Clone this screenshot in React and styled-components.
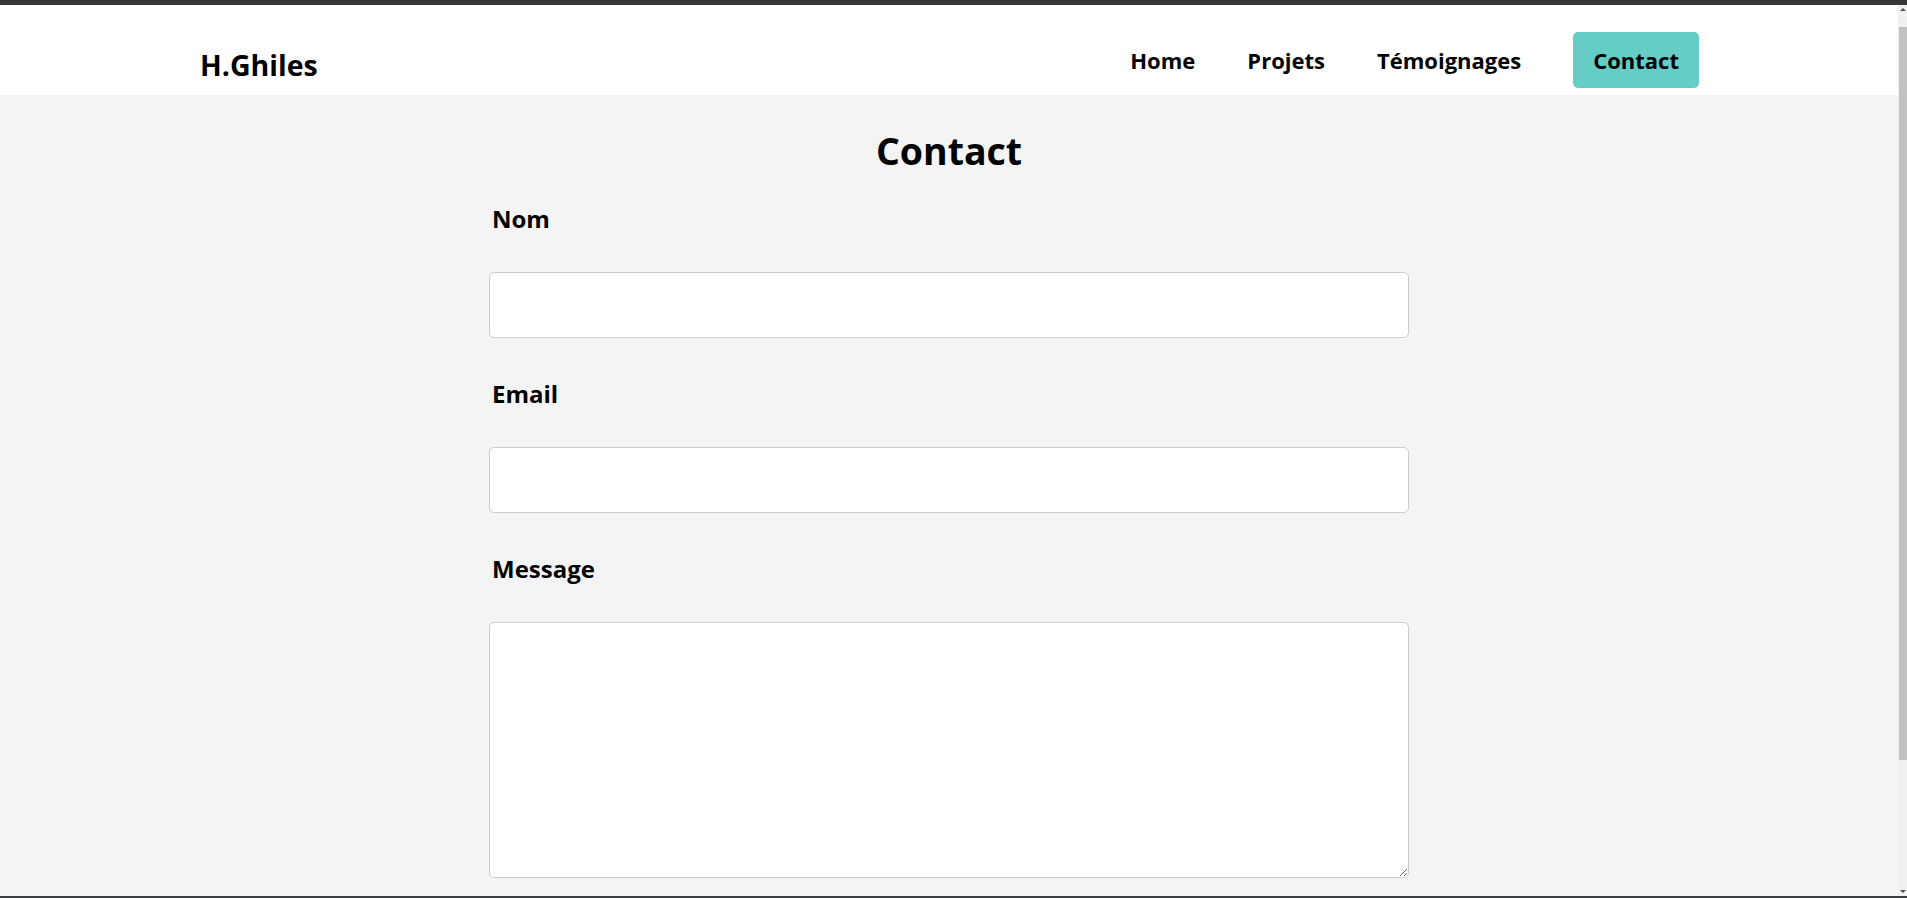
import React from 'react'
import styled, { createGlobalStyle } from 'styled-components'

const GlobalStyle = createGlobalStyle`
  * { box-sizing: border-box; }
  html, body { margin: 0; padding: 0; height: 100%; overflow: hidden; }
  body {
    font-family: "Open Sans", "Noto Sans", sans-serif;
    color: #000;
    background: #f4f4f4;
  }
`

const Shell = styled.div`
  height: 898px;
  display: flex;
  flex-direction: column;
  background: #35363a;
`

const WindowTop = styled.div`
  height: 5px;
  flex: none;
  background: #35363a;
`

const WindowBottom = styled.div`
  height: 2px;
  flex: none;
  background: #3c3f44;
`

const Frame = styled.div`
  flex: 1;
  min-height: 0;
  display: flex;
`

const Page = styled.div`
  flex: 1;
  overflow: hidden;
  background: #f4f4f4;
`

// the browser's scrollbar, drawn as the reference shows it
const ScrollTrack = styled.div`
  width: 9px;
  flex: none;
  display: flex;
  flex-direction: column;
  background: #f0f0f0;
`

const ScrollArrow = styled.div`
  height: 22px;
  flex: none;
  display: flex;
  justify-content: center;
  align-items: ${p => (p.$down ? 'flex-end' : 'flex-start')};
  padding: ${p => (p.$down ? '0 0 3px' : '3px 0 0')};
  &::before {
    content: '';
    border-left: 3px solid transparent;
    border-right: 3px solid transparent;
    ${p => (p.$down ? 'border-top: 3px solid #505050;' : 'border-bottom: 3px solid #505050;')}
  }
`

const ScrollThumb = styled.div`
  height: 733px;
  margin-left: 1px;
  background: #c1c1c1;
`

const ScrollRest = styled.div`
  flex: 1;
`

const Header = styled.header`
  height: 90px;
  background: #fff;
`

const HeaderInner = styled.div`
  max-width: 1500px;
  margin: 0 auto;
  display: flex;
  justify-content: space-between;
  align-items: flex-start;
`

const Logo = styled.h1`
  margin: 43px 0 0 1px;
  font-size: 28.5px;
  line-height: 1.2;
  font-weight: 700;
`

const NavList = styled.ul`
  list-style: none;
  margin: 27px 0 0;
  padding: 0;
  display: flex;
  gap: 52px;
`

const NavLink = styled.a`
  display: block;
  padding: ${p => (p.$active ? '12px 20px' : '12px 0')};
  font-size: 22px;
  line-height: 32px;
  font-weight: 700;
  color: #000;
  text-decoration: none;
  border-radius: 5px;
  background: ${p => (p.$active ? '#65cdc5' : 'transparent')};
`

const Main = styled.main`
  padding: 33px 0 0;
`

const Title = styled.h2`
  margin: 0 0 31px;
  text-align: center;
  font-size: 37.5px;
  line-height: 45px;
  font-weight: 700;
`

const Form = styled.form`
  width: 920px;
  margin: 0 auto;
  display: flex;
  flex-direction: column;
`

const Label = styled.label`
  display: block;
  padding-left: 3px;
  margin-bottom: 39px;
  font-size: 24px;
  line-height: 29px;
  font-weight: 700;
`

const Input = styled.input`
  width: 100%;
  height: 66px;
  margin-bottom: 41px;
  padding: 10px;
  border: 1px solid #cccccc;
  border-radius: 5px;
  background: #fff;
  font: inherit;
  font-size: 18px;
  outline: none;
`

const TextArea = styled.textarea`
  width: 100%;
  height: 256px;
  padding: 10px;
  border: 1px solid #cccccc;
  border-radius: 5px;
  background: #fff;
  font: inherit;
  font-size: 18px;
  outline: none;
`

const links = ['Home', 'Projets', 'Témoignages', 'Contact']

export default function App() {
  return (
    <>
      <GlobalStyle />
      <Shell>
        <WindowTop />
        <Frame>
          <Page>
            <Header>
              <HeaderInner>
                <Logo>H.Ghiles</Logo>
                <nav>
                  <NavList>
                    {links.map(l => (
                      <li key={l}>
                        <NavLink href="#" $active={l === 'Contact'}>{l}</NavLink>
                      </li>
                    ))}
                  </NavList>
                </nav>
              </HeaderInner>
            </Header>
            <Main>
              <Title>Contact</Title>
              <Form onSubmit={e => e.preventDefault()}>
                <Label htmlFor="nom">Nom</Label>
                <Input id="nom" type="text" />
                <Label htmlFor="email">Email</Label>
                <Input id="email" type="email" />
                <Label htmlFor="message">Message</Label>
                <TextArea id="message" />
              </Form>
            </Main>
          </Page>
          <ScrollTrack>
            <ScrollArrow />
            <ScrollThumb />
            <ScrollRest />
            <ScrollArrow $down />
          </ScrollTrack>
        </Frame>
        <WindowBottom />
      </Shell>
    </>
  )
}
